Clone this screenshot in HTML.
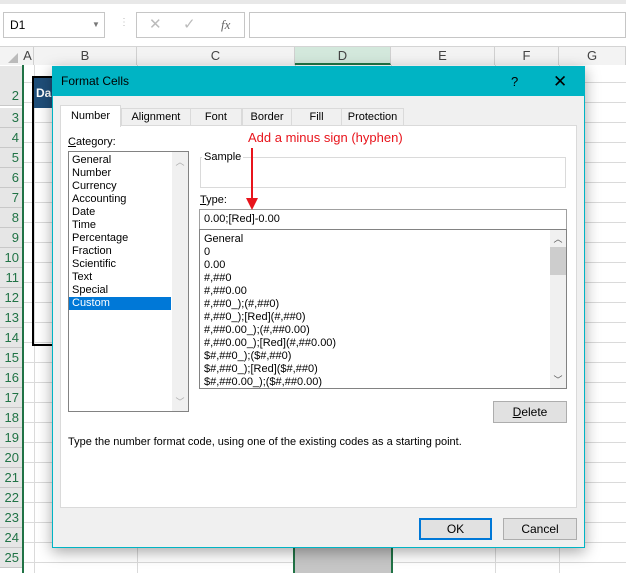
<!DOCTYPE html>
<html><head><style>
*{box-sizing:border-box;margin:0;padding:0}
body{width:626px;height:573px;overflow:hidden;background:#fff;font-family:"Liberation Sans",sans-serif;font-size:11px;color:#000;position:relative}
.a{position:absolute}
.grid{position:absolute;left:22px;top:65px;width:604px;height:508px;
background-image:linear-gradient(#dadada 1px,transparent 1px);background-size:100% 20px;background-position:0 -3px}
.vl{position:absolute;top:65px;width:1px;height:508px;background:#dadada}
.rh{position:absolute;left:0;width:22px;height:20px;background:#e6e6e6;color:#217346;font-size:13px;text-align:right;padding-right:3px;line-height:20px;border-bottom:1px solid #c8c8c8}
.ch{position:absolute;top:47px;height:18px;background:#f3f3f3;font-size:13px;text-align:center;line-height:18px;color:#444;border-right:1px solid #d0d0d0}
.li{height:13px;line-height:13px;padding-left:3px}
.btn{position:absolute;background:#e1e1e1;border:1px solid #adadad;text-align:center;font-size:12px}
</style></head><body>
<div class="a" style="left:0;top:0;width:626px;height:4px;background:#e8e8e8"></div>
<div class="a" style="left:3px;top:12px;width:102px;height:26px;border:1px solid #c6c6c6;font-size:12px;line-height:24px;padding-left:6px">D1<span class="a" style="left:88px;top:0;font-size:8px;color:#777">▼</span></div>
<div class="a" style="left:119px;top:17px;color:#bbb;font-size:10px">⋮</div>
<div class="a" style="left:136px;top:12px;width:109px;height:26px;border:1px solid #c6c6c6;color:#bbb;font-size:15px;line-height:24px"><span class="a" style="left:12px">✕</span><span class="a" style="left:46px">✓</span><span class="a" style="left:84px;color:#666;font-style:italic;font-family:'Liberation Serif',serif;font-size:13px">fx</span></div>
<div class="a" style="left:249px;top:12px;width:377px;height:26px;border:1px solid #c6c6c6"></div>
<div class="a" style="left:0;top:46px;width:626px;height:1px;background:#d4d4d4"></div>
<div class="grid"></div>
<div class="vl" style="left:34px"></div><div class="vl" style="left:137px"></div><div class="vl" style="left:295px"></div><div class="vl" style="left:391px"></div><div class="vl" style="left:495px"></div><div class="vl" style="left:559px"></div>
<div class="a" style="left:0;top:47px;width:22px;height:18px;background:#f3f3f3"></div>
<div class="a" style="left:8px;top:53px;width:0;height:0;border-left:10px solid transparent;border-bottom:10px solid #bbb"></div>
<div class="ch" style="left:22px;width:12px">A</div>
<div class="ch" style="left:34px;width:103px">B</div>
<div class="ch" style="left:137px;width:158px">C</div>
<div class="ch" style="left:295px;width:96px;background:#d3e8dc;border-bottom:2px solid #217346">D</div>
<div class="ch" style="left:391px;width:104px">E</div>
<div class="ch" style="left:495px;width:64px">F</div>
<div class="ch" style="left:559px;width:67px">G</div>
<div class="a" style="left:22px;top:65px;width:2px;height:508px;background:#217346"></div>
<div class="a" style="left:293px;top:548px;width:100px;height:25px;background:#c6c6c6;border-left:2px solid #217346;border-right:2px solid #217346"></div>
<div class="a" style="left:32px;top:76px;width:22px;height:270px;border:2px solid #000;border-right:none"></div>
<div class="a" style="left:34px;top:78px;width:20px;height:30px;background:#1f4e79;color:#fff;font-weight:bold;font-size:12px;line-height:30px;padding-left:2px">Da</div>
<div class="rh" style="top:86px">2</div>
<div class="rh" style="top:108px">3</div><div class="rh" style="top:128px">4</div><div class="rh" style="top:148px">5</div><div class="rh" style="top:168px">6</div><div class="rh" style="top:188px">7</div><div class="rh" style="top:208px">8</div><div class="rh" style="top:228px">9</div><div class="rh" style="top:248px">10</div><div class="rh" style="top:268px">11</div><div class="rh" style="top:288px">12</div><div class="rh" style="top:308px">13</div><div class="rh" style="top:328px">14</div><div class="rh" style="top:348px">15</div><div class="rh" style="top:368px">16</div><div class="rh" style="top:388px">17</div><div class="rh" style="top:408px">18</div><div class="rh" style="top:428px">19</div><div class="rh" style="top:448px">20</div><div class="rh" style="top:468px">21</div><div class="rh" style="top:488px">22</div><div class="rh" style="top:508px">23</div><div class="rh" style="top:528px">24</div><div class="rh" style="top:548px">25</div>
<div class="a" style="left:0;top:66px;width:22px;height:20px;background:#e6e6e6"></div>

<!-- dialog -->
<div class="a" style="left:52px;top:66px;width:533px;height:482px;background:#f0f0f0;border:1px solid #00b4c4;box-shadow:0 4px 14px rgba(0,0,0,.35)">
<div class="a" style="left:0;top:0;width:531px;height:29px;background:#00b4c4;color:#000;font-size:12px;line-height:29px;padding-left:8px">Format Cells
<span class="a" style="left:458px;top:0;font-size:13px">?</span>
<span class="a" style="left:500px;top:0;font-size:17px">✕</span></div>
<div class="a" style="left:7px;top:58px;width:517px;height:383px;background:#fff;border:1px solid #dadada"></div>
<div class="a" style="left:7px;top:38px;width:61px;height:22px;background:#fff;border:1px solid #dadada;border-bottom:none;line-height:20px;text-align:center">Number</div>
<div class="a" style="left:68px;top:41px;width:121px;height:18px;border:1px solid #dadada;display:flex;line-height:16px">
<div style="width:70px;text-align:center;border-right:1px solid #dadada">Alignment</div><div style="width:51px;text-align:center">Font</div></div>
<div class="a" style="left:189px;top:41px;width:162px;height:18px;border:1px solid #dadada;display:flex;line-height:16px;border-left:none">
<div style="width:54px;text-align:center;border-left:1px solid #dadada;border-right:1px solid #dadada">Border</div><div style="width:54px;text-align:center;border-right:1px solid #dadada">Fill</div><div style="width:66px;text-align:center">Protection</div></div>
</div>
<div class="a" style="left:68px;top:136px"><u>C</u>ategory:</div>
<div class="a" style="left:68px;top:151px;width:121px;height:261px;border:1px solid #828282;padding-top:2px">
<div class="li">General</div><div class="li">Number</div><div class="li">Currency</div><div class="li">Accounting</div><div class="li">Date</div><div class="li">Time</div><div class="li">Percentage</div><div class="li">Fraction</div><div class="li">Scientific</div><div class="li">Text</div><div class="li">Special</div><div class="li" style="background:#0078d7;color:#fff;width:102px">Custom</div>
<div class="a" style="left:103px;top:0;width:16px;height:259px;background:#f0f0f0;color:#aaa;font-size:9px;text-align:center"><div style="margin-top:3px">︿</div><div style="position:absolute;bottom:3px;width:16px">﹀</div></div>
</div>
<div class="a" style="left:200px;top:157px;width:366px;height:31px;border:1px solid #dadada"></div>
<div class="a" style="left:202px;top:151px;background:#fff;padding:0 2px">Sample</div>
<div class="a" style="left:200px;top:194px"><u>T</u>ype:</div>
<div class="a" style="left:199px;top:209px;width:368px;height:21px;border:1px solid #a0a0a0;line-height:19px;padding-left:4px">0.00;[Red]-0.00</div>
<div class="a" style="left:199px;top:229px;width:368px;height:160px;border:1px solid #828282;padding-top:3px;padding-left:1px">
<div class="li">General</div><div class="li">0</div><div class="li">0.00</div><div class="li">#,##0</div><div class="li">#,##0.00</div><div class="li">#,##0_);(#,##0)</div><div class="li">#,##0_);[Red](#,##0)</div><div class="li">#,##0.00_);(#,##0.00)</div><div class="li">#,##0.00_);[Red](#,##0.00)</div><div class="li">$#,##0_);($#,##0)</div><div class="li">$#,##0_);[Red]($#,##0)</div><div class="li">$#,##0.00_);($#,##0.00)</div>
<div class="a" style="left:350px;top:0;width:16px;height:158px;background:#f0f0f0;color:#555;font-size:9px;text-align:center"><div style="margin-top:2px">︿</div><div style="background:#cdcdcd;height:28px;margin-top:2px"></div><div style="position:absolute;bottom:2px;width:16px">﹀</div></div>
</div>
<div class="btn" style="left:493px;top:401px;width:74px;height:22px;line-height:20px"><u>D</u>elete</div>
<div class="a" style="left:68px;top:436px;font-size:11px">Type the number format code, using one of the existing codes as a starting point.</div>
<div class="btn" style="left:419px;top:518px;width:73px;height:22px;line-height:18px;border:2px solid #0078d7">OK</div>
<div class="btn" style="left:503px;top:518px;width:74px;height:22px;line-height:20px">Cancel</div>
<div class="a" style="left:248px;top:130px;color:#e8141c;font-size:13px">Add a minus sign (hyphen)</div>
<div class="a" style="left:251px;top:148px;width:2px;height:52px;background:#e8141c"></div>
<div class="a" style="left:246px;top:198px;width:0;height:0;border-left:6px solid transparent;border-right:6px solid transparent;border-top:12px solid #e8141c"></div>
</body></html>
